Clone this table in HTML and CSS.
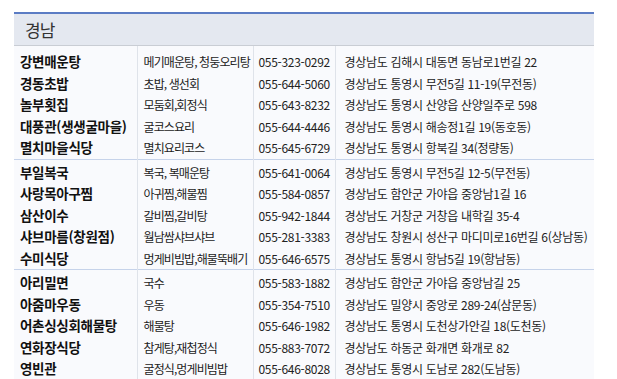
FILE: index.html
```html
<!DOCTYPE html>
<html lang="ko">
<head>
    <meta charset="UTF-8">
    <meta name="viewport" content="width=device-width, initial-scale=1.0">
    <title>경남 맛집</title>
    <link rel="stylesheet" href="styles.css">
</head>
<body>
    <div class="wrap">
        <table class="food-table">
            <colgroup>
                <col class="col-name">
                <col class="col-menu">
                <col class="col-tel">
                <col class="col-addr">
            </colgroup>
            <thead>
                <tr>
                    <th colspan="4">경남</th>
                </tr>
            </thead>
            <tbody class="group">
                <tr><td class="name">강변매운탕</td><td class="menu">메기매운탕, 청둥오리탕</td><td class="tel">055-323-0292</td><td class="addr">경상남도 김해시 대동면 동남로1번길 22</td></tr>
                <tr><td class="name">경동초밥</td><td class="menu">초밥, 생선회</td><td class="tel">055-644-5060</td><td class="addr">경상남도 통영시 무전5길 11-19(무전동)</td></tr>
                <tr><td class="name">놀부횟집</td><td class="menu">모둠회,회정식</td><td class="tel">055-643-8232</td><td class="addr">경상남도 통영시 산양읍 산양일주로 598</td></tr>
                <tr><td class="name">대풍관(생생굴마을)</td><td class="menu">굴코스요리</td><td class="tel">055-644-4446</td><td class="addr">경상남도 통영시 해송정1길 19(동호동)</td></tr>
                <tr><td class="name">멸치마을식당</td><td class="menu">멸치요리코스</td><td class="tel">055-645-6729</td><td class="addr">경상남도 통영시 항북길 34(정량동)</td></tr>
            </tbody>
            <tbody class="group">
                <tr><td class="name">부일복국</td><td class="menu">복국, 복매운탕</td><td class="tel">055-641-0064</td><td class="addr">경상남도 통영시 무전5길 12-5(무전동)</td></tr>
                <tr><td class="name">사랑목아구찜</td><td class="menu">아귀찜,해물찜</td><td class="tel">055-584-0857</td><td class="addr">경상남도 함안군 가야읍 중앙남1길 16</td></tr>
                <tr><td class="name">삼산이수</td><td class="menu">갈비찜,갈비탕</td><td class="tel">055-942-1844</td><td class="addr">경상남도 거창군 거창읍 내학길 35-4</td></tr>
                <tr><td class="name">샤브마름(창원점)</td><td class="menu">월남쌈샤브샤브</td><td class="tel">055-281-3383</td><td class="addr">경상남도 창원시 성산구 마디미로16번길 6(상남동)</td></tr>
                <tr><td class="name">수미식당</td><td class="menu">멍게비빔밥,해물뚝배기</td><td class="tel">055-646-6575</td><td class="addr">경상남도 통영시 항남5길 19(항남동)</td></tr>
            </tbody>
            <tbody class="group">
                <tr><td class="name">아리밀면</td><td class="menu">국수</td><td class="tel">055-583-1882</td><td class="addr">경상남도 함안군 가야읍 중앙남길 25</td></tr>
                <tr><td class="name">아줌마우동</td><td class="menu">우동</td><td class="tel">055-354-7510</td><td class="addr">경상남도 밀양시 중앙로 289-24(삼문동)</td></tr>
                <tr><td class="name">어촌싱싱회해물탕</td><td class="menu">해물탕</td><td class="tel">055-646-1982</td><td class="addr">경상남도 통영시 도천상가안길 18(도천동)</td></tr>
                <tr><td class="name">연화장식당</td><td class="menu">참게탕,재첩정식</td><td class="tel">055-883-7072</td><td class="addr">경상남도 하동군 화개면 화개로 82</td></tr>
                <tr><td class="name">영빈관</td><td class="menu">굴정식,멍게비빔밥</td><td class="tel">055-646-8028</td><td class="addr">경상남도 통영시 도남로 282(도남동)</td></tr>
            </tbody>
        </table>
    </div>
</body>
</html>
```

FILE: styles.css
```css
body {
    margin: 0;
    background-color: #ffffff;
    font-family: "Noto Sans CJK KR", "Noto Sans", sans-serif;
    color: #222;
}

.wrap {
    padding: 12px 0 0 14px;
}

.food-table {
    width: 580px;
    border-collapse: collapse;
    table-layout: fixed;
    background-color: #f9fafd;
}

.col-name { width: 123px; }
.col-menu { width: 116px; }
.col-tel { width: 82px; }
.col-addr { width: 259px; }

.food-table th {
    height: 31px;
    padding: 0 0 0 11px;
    text-align: left;
    font-size: 17px;
    font-weight: normal;
    letter-spacing: -1px;
    color: #333;
    background-color: #e4e8f0;
    border-top: 2px solid #5b7cc4;
    border-bottom: 1px solid #c9cdd4;
}

.food-table td {
    padding: 0 0 0 6px;
    line-height: 21.5px;
    white-space: nowrap;
    overflow: hidden;
    border-left: 1px solid #dfe3ea;
}

.food-table td.name {
    font-size: 13.5px;
    font-weight: bold;
    letter-spacing: -0.3px;
    color: #111;
    border-left: none;
}

.food-table td.menu {
    font-size: 12px;
    letter-spacing: -0.9px;
}

.food-table td.tel {
    padding-left: 5px;
    font-size: 12px;
    letter-spacing: -0.3px;
}

.food-table td.addr {
    padding-left: 9px;
    font-size: 12px;
    letter-spacing: -0.3px;
}

.group tr:first-child td {
    padding-top: 2px;
}

.group:first-of-type tr:first-child td {
    padding-top: 5px;
}

.group + .group {
    border-top: 1px solid #c6d3ea;
}
```
